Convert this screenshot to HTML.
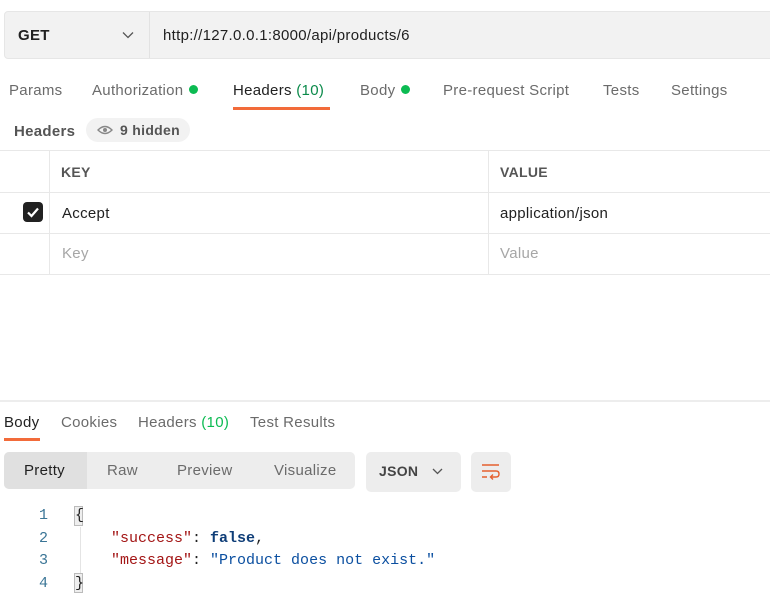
<!DOCTYPE html>
<html><head><style>
*{margin:0;padding:0;box-sizing:border-box}
body{width:770px;height:605px;background:#fff;font-family:"Liberation Sans",sans-serif;color:#212121;position:relative;overflow:hidden;font-size:15px;letter-spacing:0.3px}
.a{position:absolute;white-space:nowrap}
.g{color:#6b6b6b}
.dot{display:inline-block;width:9px;height:9px;border-radius:50%;background:#0cbb52;margin-left:6px;vertical-align:1px}
.mono{font-family:"Liberation Mono",monospace;font-size:15px;letter-spacing:0}
</style></head><body>
<div class="a" style="left:4px;top:11px;width:780px;height:48px;background:#f2f2f2;border:1px solid #e6e6e6;border-radius:4px"></div>
<div class="a" style="left:149px;top:12px;width:1px;height:46px;background:#e2e2e2"></div>
<div class="a" style="left:18px;top:27px;font-weight:bold;font-size:15px">GET</div>
<svg class="a" style="left:122px;top:31px" width="12" height="8"><path d="M1 1.5L6 6.5L11 1.5" stroke="#555" stroke-width="1.3" fill="none"/></svg>
<div class="a" style="left:163px;top:27px;font-size:15px">http://127.0.0.1:8000/api/products/6</div>

<div class="a g" style="left:9px;top:82px">Params</div>
<div class="a g" style="left:92px;top:82px">Authorization<span class="dot"></span></div>
<div class="a" style="left:233px;top:82px">Headers <span style="color:#0a8a4a">(10)</span></div>
<div class="a" style="left:233px;top:107px;width:97px;height:3px;background:#f26b3a"></div>
<div class="a g" style="left:360px;top:82px">Body<span class="dot"></span></div>
<div class="a g" style="left:443px;top:82px">Pre-request Script</div>
<div class="a g" style="left:603px;top:82px">Tests</div>
<div class="a g" style="left:671px;top:82px">Settings</div>

<div class="a" style="left:14px;top:123px;font-weight:bold;color:#555">Headers</div>
<div class="a" style="left:86px;top:118px;width:104px;height:24px;background:#f2f2f2;border-radius:12px"></div>
<svg class="a" style="left:97px;top:125px" width="16" height="10"><path d="M1 5Q8 -2 15 5Q8 12 1 5Z" fill="none" stroke="#888" stroke-width="1.4"/><circle cx="8" cy="5" r="2" fill="#888"/></svg>
<div class="a" style="left:120px;top:122px;font-weight:bold;color:#555;font-size:14px">9 hidden</div>

<div class="a" style="left:0;top:150px;width:770px;height:1px;background:#e8e8e8"></div>
<div class="a" style="left:0;top:192px;width:770px;height:1px;background:#e8e8e8"></div>
<div class="a" style="left:0;top:233px;width:770px;height:1px;background:#e8e8e8"></div>
<div class="a" style="left:0;top:274px;width:770px;height:1px;background:#e8e8e8"></div>
<div class="a" style="left:49px;top:151px;width:1px;height:123px;background:#e8e8e8"></div>
<div class="a" style="left:488px;top:151px;width:1px;height:123px;background:#e8e8e8"></div>
<div class="a" style="left:61px;top:164px;font-weight:bold;color:#555;font-size:14px">KEY</div>
<div class="a" style="left:500px;top:164px;font-weight:bold;color:#555;font-size:14px">VALUE</div>
<div class="a" style="left:23px;top:202px;width:20px;height:20px;background:#212121;border-radius:4px"></div>
<svg class="a" style="left:23px;top:202px" width="20" height="20"><path d="M5 10.5L8.5 14L15 6.5" stroke="#fff" stroke-width="2.2" fill="none"/></svg>
<div class="a" style="left:62px;top:205px">Accept</div>
<div class="a" style="left:500px;top:205px">application/json</div>
<div class="a" style="left:62px;top:245px;color:#a6a6a6">Key</div>
<div class="a" style="left:500px;top:245px;color:#a6a6a6">Value</div>

<div class="a" style="left:0;top:400px;width:770px;height:2px;background:#ededed"></div>
<div class="a" style="left:4px;top:414px">Body</div>
<div class="a" style="left:4px;top:438px;width:36px;height:3px;background:#f26b3a"></div>
<div class="a g" style="left:61px;top:414px">Cookies</div>
<div class="a g" style="left:138px;top:414px">Headers <span style="color:#0cbb52">(10)</span></div>
<div class="a g" style="left:250px;top:414px">Test Results</div>

<div class="a" style="left:4px;top:452px;width:351px;height:37px;background:#ededed;border-radius:5px"></div>
<div class="a" style="left:4px;top:452px;width:83px;height:37px;background:#e0e0e0;border-radius:5px 0 0 5px"></div>
<div class="a" style="left:24px;top:462px">Pretty</div>
<div class="a g" style="left:107px;top:462px">Raw</div>
<div class="a g" style="left:177px;top:462px">Preview</div>
<div class="a g" style="left:274px;top:462px">Visualize</div>
<div class="a" style="left:366px;top:452px;width:95px;height:40px;background:#ededed;border-radius:5px"></div>
<div class="a" style="left:379px;top:463px;font-weight:bold;color:#444;font-size:14px">JSON</div>
<svg class="a" style="left:432px;top:468px" width="11" height="7"><path d="M1 1L5.5 5.5L10 1" stroke="#555" stroke-width="1.3" fill="none"/></svg>
<div class="a" style="left:471px;top:452px;width:40px;height:40px;background:#ededed;border-radius:5px"></div>
<svg class="a" style="left:481px;top:462px" width="20" height="20"><path d="M1 3H18M1 9H15Q18 9 18 12Q18 15 15 15H10M12 12.5L9.5 15L12 17.5M1 15H6" stroke="#e5602f" stroke-width="1.4" fill="none"/></svg>

<div class="a mono" style="left:39px;top:505px;color:#3a7596;line-height:22.5px">1<br>2<br>3<br>4</div>
<div class="a" style="left:74px;top:506px;width:9px;height:20px;border:1px solid #bbb;background:#eee"></div>
<div class="a" style="left:74px;top:573px;width:9px;height:20px;border:1px solid #bbb;background:#eee"></div>
<div class="a" style="left:80px;top:527px;width:1px;height:46px;background:#e4e4e4"></div>
<div class="a mono" style="left:75px;top:505px;line-height:22.5px;color:#222">{<br>&nbsp;&nbsp;&nbsp;&nbsp;<span style="color:#a31515">"success"</span>: <span style="color:#0f3e78;font-weight:bold">false</span>,<br>&nbsp;&nbsp;&nbsp;&nbsp;<span style="color:#a31515">"message"</span>: <span style="color:#0b4fa0">"Product does not exist."</span><br>}</div>
</body></html>
